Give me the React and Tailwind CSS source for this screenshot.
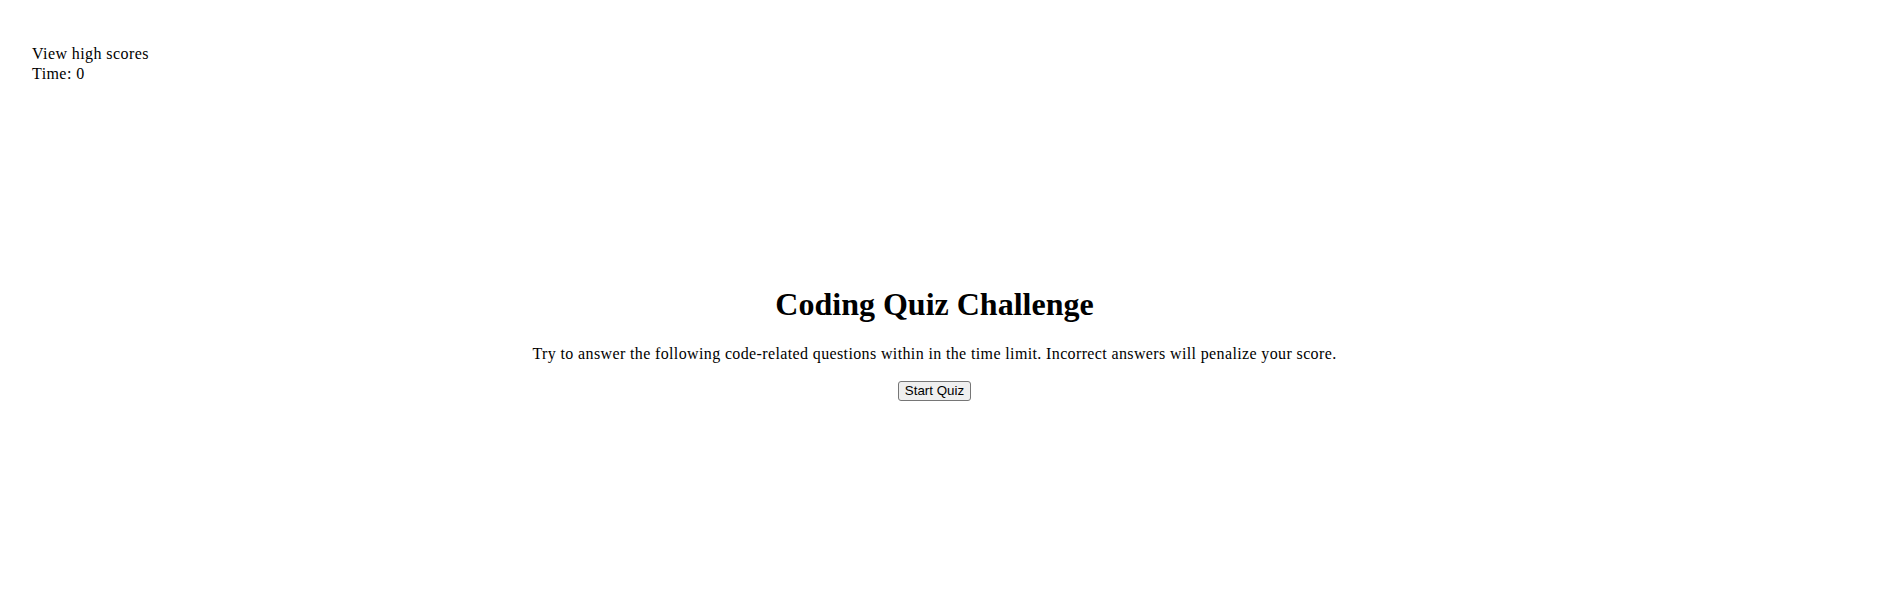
export default function App() {
  return (
    <div className="min-h-[615px] bg-white text-black font-['Liberation_Serif','Times_New_Roman',serif] text-[16px] leading-[normal]">
      <header className="pt-[44px] pl-[32px] leading-[20px] tracking-[0.42px]">
        <div>View high scores</div>
        <div>Time: 0</div>
      </header>
      <main className="w-[1869px] mt-[202px] flex flex-col items-center text-center">
        <h1 className="m-0 text-[32px] font-bold leading-[normal]">Coding Quiz Challenge</h1>
        <p className="mt-[22px] leading-[normal] tracking-[0.37px]">
          Try to answer the following code-related questions within in the time limit. Incorrect answers will penalize your score.
        </p>
        <div className="mt-[18px] flex">
          <button className="font-['Liberation_Sans',Arial,sans-serif] text-[13.333px] leading-[16px] px-[6px] py-[1px] border border-[#767676] rounded-[3px] bg-[#efefef] text-black">
            Start Quiz
          </button>
        </div>
      </main>
    </div>
  );
}
